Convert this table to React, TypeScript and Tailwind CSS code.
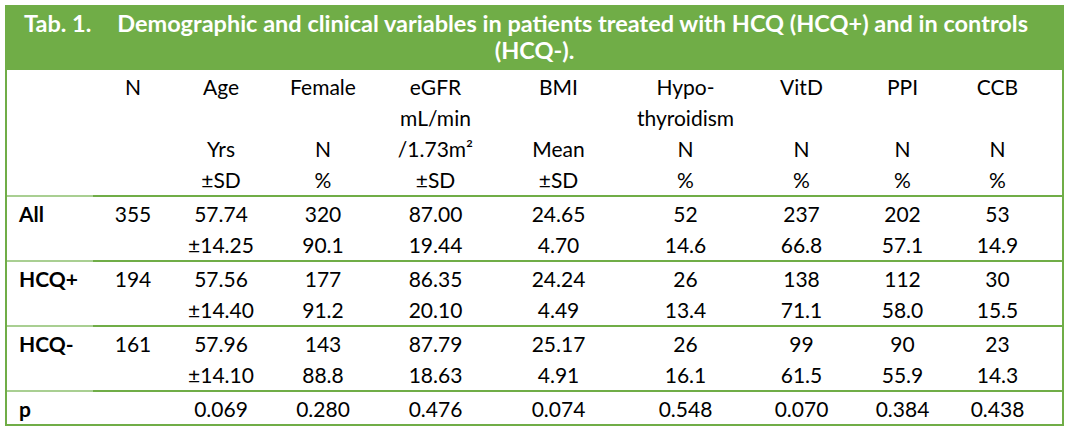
const green = "#70AD47";

const cols =
  "grid grid-cols-[86px_80px_96px_108px_117px_129px_125px_107px_95px_95px_1fr]";

const header: string[][] = [
  ["N", "", "", ""],
  ["Age", "", "Yrs", "±SD"],
  ["Female", "", "N", "%"],
  ["eGFR", "mL/min", "/1.73m²", "±SD"],
  ["BMI", "", "Mean", "±SD"],
  ["Hypo-", "thyroidism", "N", "%"],
  ["VitD", "", "N", "%"],
  ["PPI", "", "N", "%"],
  ["CCB", "", "N", "%"],
];

const rows: { label: string; vals: string[][] }[] = [
  {
    label: "All",
    vals: [
      ["355", ""],
      ["57.74", "±14.25"],
      ["320", "90.1"],
      ["87.00", "19.44"],
      ["24.65", "4.70"],
      ["52", "14.6"],
      ["237", "66.8"],
      ["202", "57.1"],
      ["53", "14.9"],
    ],
  },
  {
    label: "HCQ+",
    vals: [
      ["194", ""],
      ["57.56", "±14.40"],
      ["177", "91.2"],
      ["86.35", "20.10"],
      ["24.24", "4.49"],
      ["26", "13.4"],
      ["138", "71.1"],
      ["112", "58.0"],
      ["30", "15.5"],
    ],
  },
  {
    label: "HCQ-",
    vals: [
      ["161", ""],
      ["57.96", "±14.10"],
      ["143", "88.8"],
      ["87.79", "18.63"],
      ["25.17", "4.91"],
      ["26", "16.1"],
      ["99", "61.5"],
      ["90", "55.9"],
      ["23", "14.3"],
    ],
  },
];

const pvals = ["", "0.069", "0.280", "0.476", "0.074", "0.548", "0.070", "0.384", "0.438"];

function Lines({ items }: { items: string[] }) {
  return (
    <div className="flex flex-col items-center">
      {items.map((t, i) => (
        <div key={i} className="h-[31px] whitespace-nowrap leading-[31px]">
          {t}
        </div>
      ))}
    </div>
  );
}

export default function App() {
  return (
    <div className="min-h-screen bg-white pl-[5px] pt-[5px] font-['Lato',sans-serif] text-black">
      <div className="w-[1059px] border-2 border-[#70AD47]">
        {/* caption */}
        <div
          className="bg-[#70AD47] pt-[3px] pb-[6px] text-center text-[23.5px] font-bold leading-[27px] text-white"
          style={{ backgroundColor: green }}
        >
          <div className="whitespace-nowrap pr-[17px]">
            Tab. 1.<span className="inline-block w-[26px]" />
            Demographic and clinical variables in patients treated with HCQ (HCQ+) and in controls
          </div>
          <div>(HCQ-).</div>
        </div>

        <div className="text-[21px]">
          {/* column headings */}
          <div className={`${cols} pt-[1px]`}>
            <div />
            {header.map((h, i) => (
              <Lines key={i} items={h} />
            ))}
            <div />
          </div>

          {rows.map((r) => (
            <div key={r.label} className={cols}>
              <div className="border-t-2 border-[#a9cf92] pl-[12px] pt-[1px] font-bold leading-[31px]">
                {r.label}
              </div>
              {r.vals.map((v, i) => (
                <div key={i} className="border-t-2 border-[#70AD47] pt-[1px]">
                  <Lines items={v} />
                </div>
              ))}
              <div className="border-t-2 border-[#70AD47]" />
            </div>
          ))}

          <div className={cols}>
            <div className="border-t-2 border-[#a9cf92] pl-[12px] pt-[1px] font-bold leading-[31px]">p</div>
            {pvals.map((p, i) => (
              <div key={i} className="border-t-2 border-[#70AD47] pt-[1px]">
                <Lines items={[p]} />
              </div>
            ))}
            <div className="border-t-2 border-[#70AD47]" />
          </div>
        </div>
      </div>
    </div>
  );
}
